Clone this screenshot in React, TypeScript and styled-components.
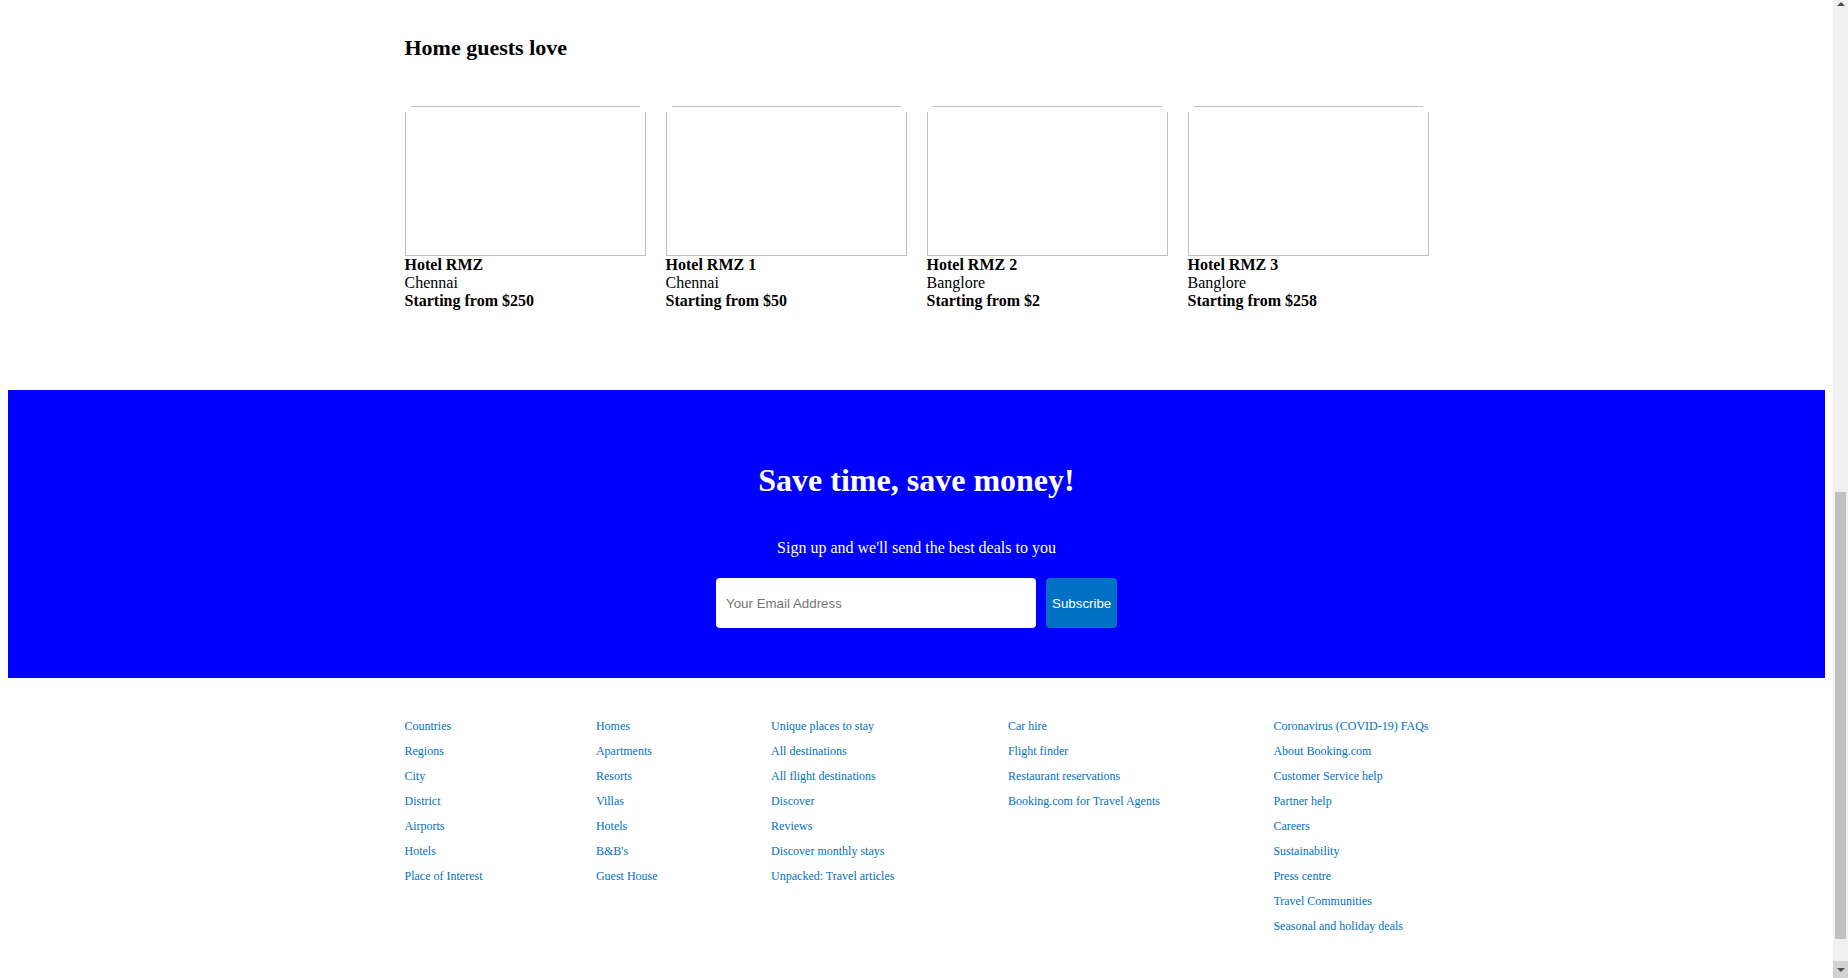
import React from "react";
import styled, { createGlobalStyle } from "styled-components";

const GlobalStyle = createGlobalStyle`
  body {
    margin: 0 23px 0 8px;
    background: #ffffff;
    color: #000000;
    font-family: "Liberation Serif", "Times New Roman", serif;
    font-size: 16px;
  }
  * {
    box-sizing: border-box;
  }
`;

const Page = styled.div`
  display: flex;
  flex-direction: column;
`;

const Container = styled.div`
  width: 1024px;
  margin: 0 auto;
`;

const GuestsSection = styled(Container)`
  padding-top: 35px;
`;

const SectionTitle = styled.h2`
  margin: 0;
  font-size: 22px;
  font-weight: bold;
  line-height: normal;
`;

const CardRow = styled.div`
  display: grid;
  grid-template-columns: repeat(4, 1fr);
  column-gap: 20px;
  margin-top: 45px;
`;

const Card = styled.div`
  display: flex;
  flex-direction: column;
`;

const line = "linear-gradient(#c0c0c0, #c0c0c0)";

const ImageFrame = styled.div`
  height: 150px;
  background:
    ${line} left 6px top 0 / calc(100% - 12px) 1px no-repeat,
    ${line} left 0 top 6px / 1px calc(100% - 6px) no-repeat,
    ${line} right 0 top 6px / 1px calc(100% - 6px) no-repeat,
    ${line} left 0 bottom 0 / 100% 1px no-repeat;
`;

const CardText = styled.div<{ $bold?: boolean }>`
  font-size: 16px;
  line-height: normal;
  font-weight: ${(p) => (p.$bold ? "bold" : "normal")};
`;

const Band = styled.section`
  margin-top: 80px;
  background: #0000ff;
  padding: 72px 0 50px;
  display: flex;
  flex-direction: column;
  align-items: center;
  color: #ffffff;
`;

const BandTitle = styled.h1`
  margin: 0;
  font-size: 32px;
  font-weight: bold;
  line-height: normal;
`;

const BandText = styled.p`
  margin: 40px 0 0;
  font-size: 16px;
  line-height: normal;
`;

const SubscribeForm = styled.form`
  display: flex;
  gap: 10px;
  margin-top: 21px;
`;

const EmailInput = styled.input`
  width: 320px;
  height: 50px;
  border: none;
  border-radius: 4px;
  padding: 0 10px;
  font-family: "Liberation Sans", Arial, sans-serif;
  font-size: 13.333px;
  color: #000;
  background: #fff;
  outline: none;
  &::placeholder {
    color: #757575;
  }
`;

const SubscribeButton = styled.button`
  width: 71px;
  height: 50px;
  border: none;
  border-radius: 4px;
  padding: 0 6px;
  background: #0071c2;
  color: #ffffff;
  font-family: "Liberation Sans", Arial, sans-serif;
  font-size: 13.333px;
  cursor: pointer;
`;

const Footer = styled(Container)`
  display: flex;
  justify-content: space-between;
  align-items: flex-start;
  padding: 41px 0 43px;
`;

const LinkColumn = styled.div`
  display: flex;
  flex-direction: column;
  gap: 11px;
`;

const FooterLink = styled.a`
  display: block;
  font-size: 12px;
  line-height: 14px;
  color: #0071c2;
  text-decoration: none;
  white-space: nowrap;
`;

/* Imitation of the browser's classic scrollbar that sits over the right edge */
const ScrollBar = styled.div`
  position: fixed;
  top: 0;
  right: 0;
  width: 15px;
  height: 100vh;
  background: #f1f1f1;
  display: flex;
  flex-direction: column;
  align-items: center;
`;

const ScrollArrow = styled.div<{ $down?: boolean }>`
  width: 15px;
  height: 17px;
  flex: none;
  display: flex;
  align-items: center;
  justify-content: center;
  background: ${(p) => (p.$down ? "#d2d2d2" : "transparent")};
  &::after {
    content: "";
    width: 0;
    height: 0;
    border-left: 4px solid transparent;
    border-right: 4px solid transparent;
    ${(p) =>
      p.$down
        ? "border-top: 4px solid #505050;"
        : "border-bottom: 4px solid #505050; margin-top: -10px;"}
  }
`;

const ScrollTrack = styled.div`
  flex: 1;
  width: 100%;
  display: flex;
  flex-direction: column;
  align-items: center;
`;

const ScrollThumb = styled.div`
  width: 11px;
  height: 447px;
  margin-top: 475px;
  background: #c1c1c1;
`;

const hotels = [
  { name: "Hotel RMZ", city: "Chennai", price: 250 },
  { name: "Hotel RMZ 1", city: "Chennai", price: 50 },
  { name: "Hotel RMZ 2", city: "Banglore", price: 2 },
  { name: "Hotel RMZ 3", city: "Banglore", price: 258 },
];

const footerColumns: string[][] = [
  ["Countries", "Regions", "City", "District", "Airports", "Hotels", "Place of Interest"],
  ["Homes", "Apartments", "Resorts", "Villas", "Hotels", "B&B's", "Guest House"],
  [
    "Unique places to stay",
    "All destinations",
    "All flight destinations",
    "Discover",
    "Reviews",
    "Discover monthly stays",
    "Unpacked: Travel articles",
  ],
  ["Car hire", "Flight finder", "Restaurant reservations", "Booking.com for Travel Agents"],
  [
    "Coronavirus (COVID-19) FAQs",
    "About Booking.com",
    "Customer Service help",
    "Partner help",
    "Careers",
    "Sustainability",
    "Press centre",
    "Travel Communities",
    "Seasonal and holiday deals",
  ],
];

export default function App() {
  return (
    <Page>
      <GlobalStyle />
      <GuestsSection>
        <SectionTitle>Home guests love</SectionTitle>
        <CardRow>
          {hotels.map((h) => (
            <Card key={h.name}>
              <ImageFrame />
              <CardText $bold>{h.name}</CardText>
              <CardText>{h.city}</CardText>
              <CardText $bold>Starting from ${h.price}</CardText>
            </Card>
          ))}
        </CardRow>
      </GuestsSection>

      <Band>
        <BandTitle>Save time, save money!</BandTitle>
        <BandText>Sign up and we'll send the best deals to you</BandText>
        <SubscribeForm onSubmit={(e) => e.preventDefault()}>
          <EmailInput type="email" placeholder="Your Email Address" />
          <SubscribeButton type="submit">Subscribe</SubscribeButton>
        </SubscribeForm>
      </Band>

      <Footer>
        {footerColumns.map((col, i) => (
          <LinkColumn key={i}>
            {col.map((label) => (
              <FooterLink key={label} href="#">
                {label}
              </FooterLink>
            ))}
          </LinkColumn>
        ))}
      </Footer>

      <ScrollBar aria-hidden="true">
        <ScrollArrow />
        <ScrollTrack>
          <ScrollThumb />
        </ScrollTrack>
        <ScrollArrow $down />
      </ScrollBar>
    </Page>
  );
}
